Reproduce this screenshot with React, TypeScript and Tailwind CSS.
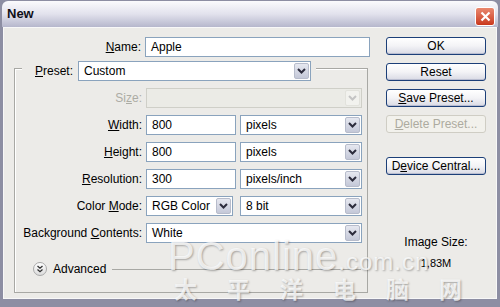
import React from 'react';

const font = { fontFamily: '"Liberation Sans", Arial, sans-serif' };

function Chevron({ faded }: { faded?: boolean }) {
  return (
    <svg width="9" height="6" viewBox="0 0 9 6">
      <path d="M1 1 L4.5 4.5 L8 1" fill="none" stroke={faded ? '#c4c4c4' : '#2c2c3c'} strokeWidth="2" />
    </svg>
  );
}

function Select({ value, w, disabled, className = '' }: { value?: string; w: string; disabled?: boolean; className?: string }) {
  return (
    <div
      className={`${w} ${className} h-[20px] flex items-stretch border ${
        disabled ? 'border-[#cfcfc8] bg-[#ebebe6]' : 'border-[#8aa3bd] bg-white'
      }`}
    >
      <div className="flex-1 flex items-center pl-[5px] text-[12px] text-black truncate">{value}</div>
      <div
        className={`w-[15px] m-[1px] flex items-center justify-center rounded-[2px] border ${
          disabled ? 'border-[#e2e2dc] bg-[#f2f2ee]' : 'border-[#b7bccb] bg-gradient-to-b from-[#e6e8f0] to-[#c4c8d8]'
        }`}
      >
        <Chevron faded={disabled} />
      </div>
    </div>
  );
}

function Input({ value, w }: { value: string; w: string }) {
  return (
    <div className={`${w} h-[20px] border border-[#8aa3bd] bg-white flex items-center pl-[5px] text-[12px] text-black`}>
      {value}
    </div>
  );
}

function Label({ children }: { children: React.ReactNode }) {
  return <div className="w-[127px] text-right text-[12px] text-black leading-[20px]">{children}</div>;
}

function Btn({ children, disabled }: { children: React.ReactNode; disabled?: boolean }) {
  return (
    <div
      className={`w-[100px] h-[18px] rounded-[3px] border flex items-center justify-center text-[12px] ${
        disabled
          ? 'border-[#cfcdc4] text-[#adaba0] bg-[#f2f1ec]'
          : 'border-[#1c3f78] text-black bg-gradient-to-b from-white via-[#f3f3f6] to-[#d9dae4] shadow-[inset_0_-1px_0_#b9bdd0]'
      }`}
    >
      {children}
    </div>
  );
}

export default function App() {
  return (
    <div style={font} className="relative w-[500px] h-[307px] bg-[#8d8ea3] flex flex-col px-[3px] pb-[8px] pt-[1px] overflow-hidden">
      {/* title bar */}
      <div className="h-[26px] -mx-[1px] flex items-center justify-between pl-[5px] pr-[3px] rounded-t-[6px] bg-gradient-to-b from-[#fbfbfd] via-[#e2e2ed] to-[#b6b7cc]">
        <span className="text-[13px] font-bold text-[#101018]">New</span>
        <div className="w-[20px] h-[19px] rounded-[3px] border border-white bg-gradient-to-b from-[#e9876e] to-[#c9361b] flex items-center justify-center mt-[4px]">
          <svg width="11" height="11" viewBox="0 0 11 11">
            <path d="M1.5 1.5 L9.5 9.5 M9.5 1.5 L1.5 9.5" stroke="white" strokeWidth="2.2" />
          </svg>
        </div>
      </div>

      {/* body */}
      <div className="flex-1 bg-[#ecebe8] border border-[#f8f8f8] flex pl-[10px] pr-[10px]">
        {/* left column */}
        <div className="w-[357px] pt-[9px] flex flex-col">
          <div className="flex items-center gap-[4px]">
            <Label>
              <span className="underline">N</span>ame:
            </Label>
            <Input value="Apple" w="w-[225px]" />
          </div>

          <div className="mt-[11px] w-[354px] border border-[#a8a8a4] shadow-[inset_1px_1px_0_white] flex flex-col pb-[14px]">
            <div className="-mt-[8px] ml-[7px] self-start bg-[#ecebe8] pl-[13px] pr-[5px] flex items-center gap-[5px]">
              <span className="text-[12px] text-black">
                <span className="underline">P</span>reset:
              </span>
              <Select value="Custom" w="w-[233px]" />
            </div>

            <div className="mt-[7px] flex flex-col gap-[7px]">
              <div className="flex items-center gap-[4px]">
                <Label>
                  <span className="text-[#acaca4]">
                    Si<span className="underline">z</span>e:
                  </span>
                </Label>
                <Select w="w-[216px]" disabled />
              </div>
              <div className="flex items-center gap-[4px]">
                <Label>
                  <span className="underline">W</span>idth:
                </Label>
                <Input value="800" w="w-[90px]" />
                <Select value="pixels" w="w-[122px]" />
              </div>
              <div className="flex items-center gap-[4px]">
                <Label>
                  <span className="underline">H</span>eight:
                </Label>
                <Input value="800" w="w-[90px]" />
                <Select value="pixels" w="w-[122px]" />
              </div>
              <div className="flex items-center gap-[4px]">
                <Label>
                  <span className="underline">R</span>esolution:
                </Label>
                <Input value="300" w="w-[90px]" />
                <Select value="pixels/inch" w="w-[122px]" />
              </div>
              <div className="flex items-center gap-[4px]">
                <Label>
                  Color <span className="underline">M</span>ode:
                </Label>
                <Select value="RGB Color" w="w-[87px]" />
                <Select value="8 bit" w="w-[122px]" className="ml-[3px]" />
              </div>
              <div className="flex items-center gap-[4px]">
                <Label>
                  Background <span className="underline">C</span>ontents:
                </Label>
                <Select value="White" w="w-[216px]" />
              </div>
            </div>

            <div className="mt-[17px] ml-[18px] mr-[6px] flex items-center">
              <div className="w-[14px] h-[14px] rounded-full border border-[#a9a9a9] bg-gradient-to-b from-white to-[#dcdcdc] flex items-center justify-center">
                <svg width="8" height="8" viewBox="0 0 8 8">
                  <path d="M1.5 1 L4 3.2 L6.5 1 M1.5 4.5 L4 6.7 L6.5 4.5" fill="none" stroke="#333" strokeWidth="1.3" />
                </svg>
              </div>
              <span className="ml-[6px] text-[12px] text-black">Advanced</span>
              <div className="ml-[6px] flex-1 h-px bg-[#a8a8a4]" />
            </div>
          </div>
        </div>

        {/* right column */}
        <div className="ml-[15px] pt-[9px] flex flex-col items-center">
          <div className="flex flex-col gap-[8px]">
            <Btn>OK</Btn>
            <Btn>Reset</Btn>
            <Btn>
              <span className="underline">S</span>ave Preset...
            </Btn>
            <Btn disabled>
              <span className="underline">D</span>elete Preset...
            </Btn>
          </div>
          <div className="mt-[24px]">
            <Btn>
              D<span className="underline">e</span>vice Central...
            </Btn>
          </div>
          <div className="mt-[60px] text-[12px] text-black leading-[14px]">Image Size:</div>
          <div className="mt-[7px] text-[11px] text-black leading-[14px]">1,83M</div>
        </div>
      </div>

      {/* watermark */}
      <div className="absolute left-[168px] top-[236px] pointer-events-none select-none flex flex-col whitespace-nowrap text-white/75 font-bold [text-shadow:1px_1px_2px_rgba(0,0,0,0.3)]">
        <div className="flex items-baseline leading-none">
          <span className="text-[40px] tracking-[1px] font-normal">PConline</span>
          <span className="text-[24px] tracking-[1px] font-normal">.com.cn</span>
        </div>
        <div
          className="mt-[1px] text-[23px] leading-none tracking-[30px] pl-[6px] whitespace-nowrap"
          style={{ fontFamily: '"Noto Sans CJK SC", sans-serif' }}
        >
          太平洋电脑网
        </div>
      </div>
    </div>
  );
}
